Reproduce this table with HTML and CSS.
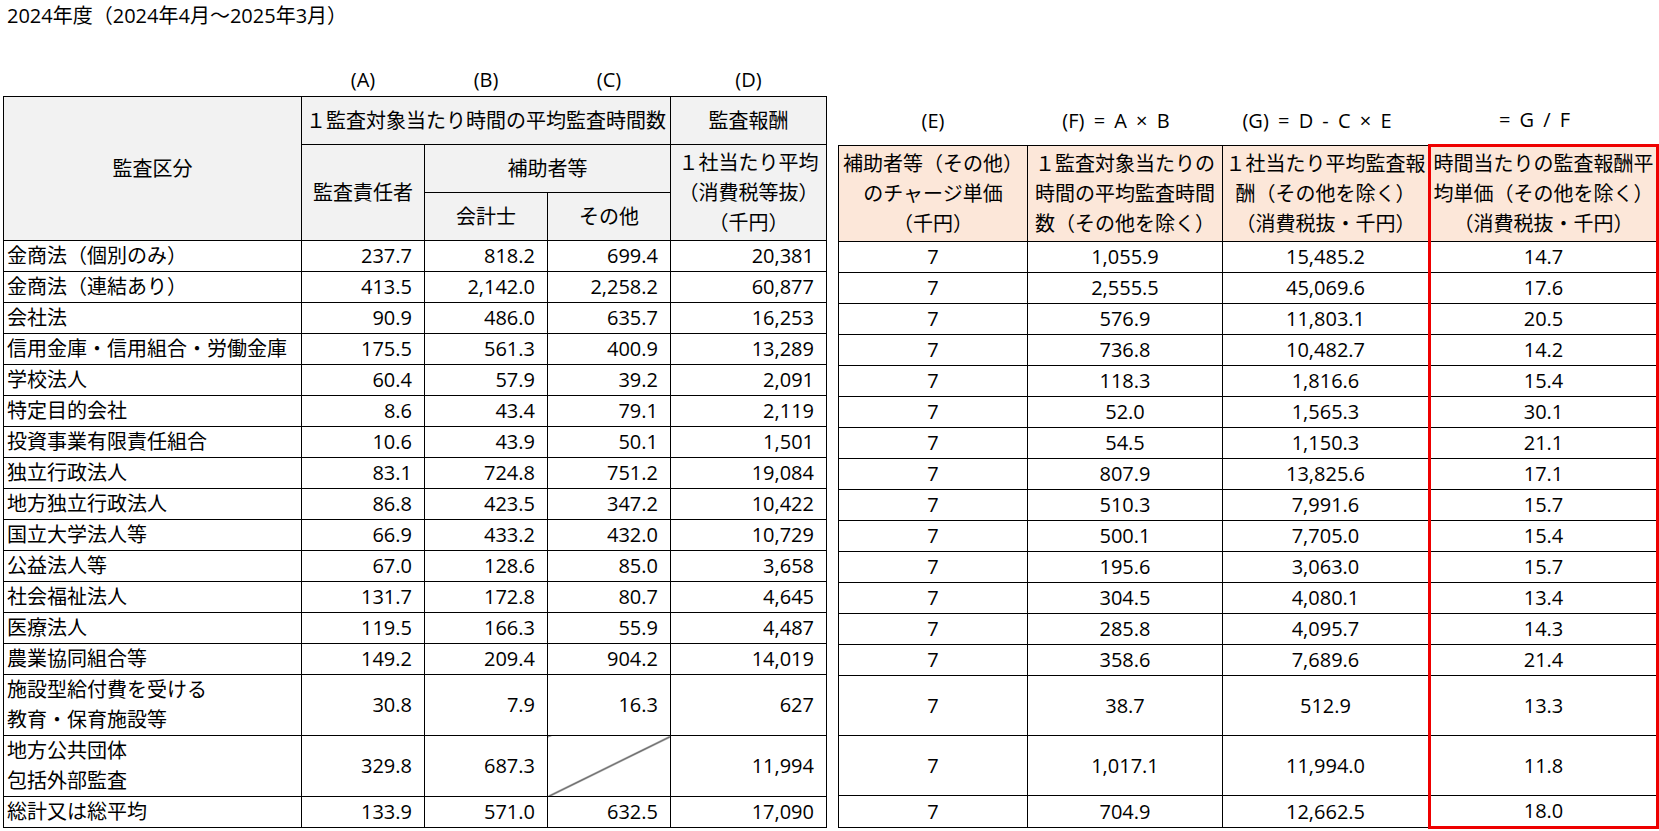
FILE: index.html
```html
<!DOCTYPE html>
<html lang="ja">
<head>
<meta charset="utf-8">
<title>監査報酬</title>
<link rel="stylesheet" href="styles.css">
</head>
<body>
<div class="title">2024年度（2024年4月～2025年3月）</div>
<div class="sheet">
  <div class="left">
    <table class="tbl tl">
      <colgroup><col class="c0"><col class="c1"><col class="c1"><col class="c1"><col class="c4"></colgroup>
      <tr class="lab"><td></td><td>(A)</td><td>(B)</td><td>(C)</td><td>(D)</td></tr>
      <tr class="h"><th rowspan="3">監査区分</th><th colspan="3">１監査対象当たり時間の平均監査時間数</th><th>監査報酬</th></tr>
      <tr class="h"><th rowspan="2">監査責任者</th><th colspan="2">補助者等</th><th rowspan="2" class="ml">１社当たり平均<br>（消費税等抜）<br>（千円）</th></tr>
      <tr class="h"><th>会計士</th><th>その他</th></tr>
      <tr><td class="nm">金商法（個別のみ）</td><td>237.7</td><td>818.2</td><td>699.4</td><td>20,381</td></tr>
      <tr><td class="nm">金商法（連結あり）</td><td>413.5</td><td>2,142.0</td><td>2,258.2</td><td>60,877</td></tr>
      <tr><td class="nm">会社法</td><td>90.9</td><td>486.0</td><td>635.7</td><td>16,253</td></tr>
      <tr><td class="nm">信用金庫・信用組合・労働金庫</td><td>175.5</td><td>561.3</td><td>400.9</td><td>13,289</td></tr>
      <tr><td class="nm">学校法人</td><td>60.4</td><td>57.9</td><td>39.2</td><td>2,091</td></tr>
      <tr><td class="nm">特定目的会社</td><td>8.6</td><td>43.4</td><td>79.1</td><td>2,119</td></tr>
      <tr><td class="nm">投資事業有限責任組合</td><td>10.6</td><td>43.9</td><td>50.1</td><td>1,501</td></tr>
      <tr><td class="nm">独立行政法人</td><td>83.1</td><td>724.8</td><td>751.2</td><td>19,084</td></tr>
      <tr><td class="nm">地方独立行政法人</td><td>86.8</td><td>423.5</td><td>347.2</td><td>10,422</td></tr>
      <tr><td class="nm">国立大学法人等</td><td>66.9</td><td>433.2</td><td>432.0</td><td>10,729</td></tr>
      <tr><td class="nm">公益法人等</td><td>67.0</td><td>128.6</td><td>85.0</td><td>3,658</td></tr>
      <tr><td class="nm">社会福祉法人</td><td>131.7</td><td>172.8</td><td>80.7</td><td>4,645</td></tr>
      <tr><td class="nm">医療法人</td><td>119.5</td><td>166.3</td><td>55.9</td><td>4,487</td></tr>
      <tr><td class="nm">農業協同組合等</td><td>149.2</td><td>209.4</td><td>904.2</td><td>14,019</td></tr>
      <tr class="dbl"><td class="nm">施設型給付費を受ける<br>教育・保育施設等</td><td>30.8</td><td>7.9</td><td>16.3</td><td>627</td></tr>
      <tr class="dbl"><td class="nm">地方公共団体<br>包括外部監査</td><td>329.8</td><td>687.3</td><td class="diag"></td><td>11,994</td></tr>
      <tr><td class="nm">総計又は総平均</td><td>133.9</td><td>571.0</td><td>632.5</td><td>17,090</td></tr>
    </table>
  </div>
  <div class="right">
    <table class="tbl tr2">
      <colgroup><col class="e"><col class="f"><col class="g"><col class="gf"></colgroup>
      <tr class="lab2"><td>(E)</td><td class="sh">(F) = A × B</td><td class="sh">(G) = D - C × E</td><td class="sh">= G / F</td></tr>
      <tr class="hh"><th>補助者等（その他）<br>のチャージ単価<br>（千円）</th><th>１監査対象当たりの<br>時間の平均監査時間<br>数（その他を除く）</th><th>１社当たり平均監査報<br>酬（その他を除く）<br>（消費税抜・千円）</th><th class="red">時間当たりの監査報酬平<br>均単価（その他を除く）<br>（消費税抜・千円）</th></tr>
      <tr><td>7</td><td>1,055.9</td><td>15,485.2</td><td class="red">14.7</td></tr>
      <tr><td>7</td><td>2,555.5</td><td>45,069.6</td><td class="red">17.6</td></tr>
      <tr><td>7</td><td>576.9</td><td>11,803.1</td><td class="red">20.5</td></tr>
      <tr><td>7</td><td>736.8</td><td>10,482.7</td><td class="red">14.2</td></tr>
      <tr><td>7</td><td>118.3</td><td>1,816.6</td><td class="red">15.4</td></tr>
      <tr><td>7</td><td>52.0</td><td>1,565.3</td><td class="red">30.1</td></tr>
      <tr><td>7</td><td>54.5</td><td>1,150.3</td><td class="red">21.1</td></tr>
      <tr><td>7</td><td>807.9</td><td>13,825.6</td><td class="red">17.1</td></tr>
      <tr><td>7</td><td>510.3</td><td>7,991.6</td><td class="red">15.7</td></tr>
      <tr><td>7</td><td>500.1</td><td>7,705.0</td><td class="red">15.4</td></tr>
      <tr><td>7</td><td>195.6</td><td>3,063.0</td><td class="red">15.7</td></tr>
      <tr><td>7</td><td>304.5</td><td>4,080.1</td><td class="red">13.4</td></tr>
      <tr><td>7</td><td>285.8</td><td>4,095.7</td><td class="red">14.3</td></tr>
      <tr><td>7</td><td>358.6</td><td>7,689.6</td><td class="red">21.4</td></tr>
      <tr class="dbl"><td>7</td><td>38.7</td><td>512.9</td><td class="red">13.3</td></tr>
      <tr class="dbl"><td>7</td><td>1,017.1</td><td>11,994.0</td><td class="red">11.8</td></tr>
      <tr class="last"><td>7</td><td>704.9</td><td>12,662.5</td><td class="red">18.0</td></tr>
    </table>
  </div>
</div>
</body>
</html>
```
FILE: styles.css
```css
* { box-sizing: border-box; }
html, body { margin: 0; padding: 0; background: #fff; }
body {
  font-family: "Open Sans", "Noto Sans CJK JP", sans-serif;
  font-size: 20px;
  color: #000;
  width: 1659px;
  height: 831px;
  overflow: hidden;
}
.title {
  height: 32px;
  line-height: 32px;
  padding-left: 7px;
  margin-bottom: 32px;
  white-space: nowrap;
}
.sheet {
  display: flex;
  align-items: flex-start;
  padding-left: 3px;
  gap: 11px;
}
.right { padding-top: 32px; }
.tbl {
  border-collapse: collapse;
  table-layout: fixed;
  font-size: 20px;
}
.tl { width: 823px; }
.tr2 { width: 819px; }
.c0 { width: 298px; }
.c1 { width: 123px; }
.c4 { width: 156px; }
.e { width: 189px; }
.f { width: 195px; }
.g { width: 207px; }
.gf { width: 228px; }
.tbl th, .tbl td {
  padding: 0;
  white-space: nowrap;
  overflow: hidden;
}
.tbl th {
  font-weight: normal;
  text-align: center;
  vertical-align: middle;
  border: 1px solid #000;
  line-height: 30px;
}
.tl th { background: #f2f2f2; }
.tr2 th { background: #fce7d9; }
.tbl tr.h th { height: 48px; }
.tbl td {
  border: 1px solid #000;
  height: 30px;
  line-height: 30px;
  vertical-align: middle;
}
.tl td { text-align: right; padding-right: 12px; }
.tl td.nm { text-align: left; padding-left: 3px; padding-right: 0; }
.tr2 td { text-align: center; }
.tbl tr.dbl td { height: 60px; line-height: 30px; }
.tbl tr.lab td {
  border: none;
  height: 32px;
  text-align: center;
  padding: 0;
  line-height: 32px;
}
.tbl tr.lab2 td {
  border: none;
  height: 48px;
  line-height: 48px;
  text-align: center;
  padding: 0;
  word-spacing: 4px;
}
.tbl tr.lab2 td.sh { padding-right: 18px; }
.tbl tr.hh th { height: 96px; }
.tbl .red {
  border-left: 3px solid #ee0000;
  border-right: 3px solid #ee0000;
}
.tbl th.red { border-top: 3px solid #ee0000; }
.tbl tr.last td.red { border-bottom: 3px solid #ee0000; }
.diag {
  background: linear-gradient(to bottom right, transparent calc(50% - 1px), #000 50%, transparent calc(50% + 1px));
}
```
